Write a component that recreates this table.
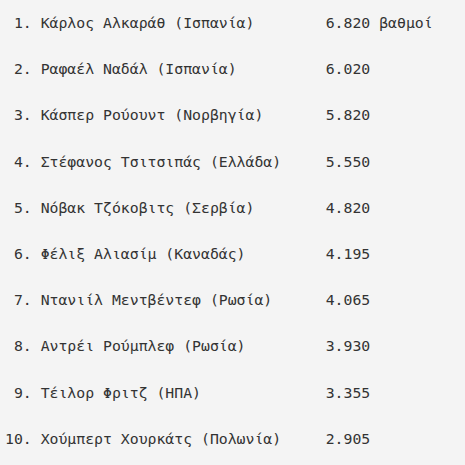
const ranking = [
  { name: "Κάρλος Αλκαράθ (Ισπανία)", points: "6.820 βαθμοί" },
  { name: "Ραφαέλ Ναδάλ (Ισπανία)", points: "6.020" },
  { name: "Κάσπερ Ρούουντ (Νορβηγία)", points: "5.820" },
  { name: "Στέφανος Τσιτσιπάς (Ελλάδα)", points: "5.550" },
  { name: "Νόβακ Τζόκοβιτς (Σερβία)", points: "4.820" },
  { name: "Φέλιξ Αλιασίμ (Καναδάς)", points: "4.195" },
  { name: "Ντανιίλ Μεντβέντεφ (Ρωσία)", points: "4.065" },
  { name: "Αντρέι Ρούμπλεφ (Ρωσία)", points: "3.930" },
  { name: "Τέιλορ Φριτζ (ΗΠΑ)", points: "3.355" },
  { name: "Χούμπερτ Χουρκάτς (Πολωνία)", points: "2.905" },
];

export default function App() {
  return (
    <div className="w-[465px] h-[465px] bg-[#f4f4f4] text-[#333333] pl-[5px] pt-[11px] font-['DejaVu_Sans_Mono',monospace] text-[14.8px] leading-[23.1px]">
      {ranking.map((r, i) => {
        const label = `${String(i + 1).padStart(2, " ")}. ${r.name}`;
        return (
          <div key={i} className="h-[46.2px] whitespace-pre">
            {label.padEnd(36, " ") + r.points}
          </div>
        );
      })}
    </div>
  );
}
